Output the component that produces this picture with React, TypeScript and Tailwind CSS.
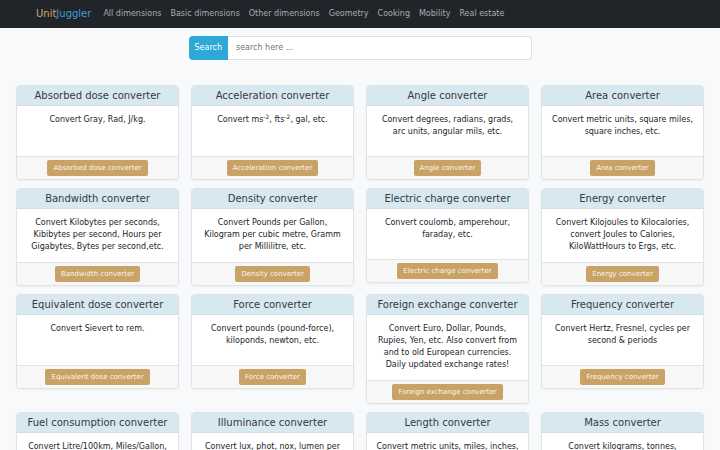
import { ReactNode } from "react";

type Converter = {
  title: string;
  desc: ReactNode;
};

const converters: Converter[] = [
  { title: "Absorbed dose converter", desc: "Convert Gray, Rad, J/kg." },
  {
    title: "Acceleration converter",
    desc: (
      <>
        Convert ms<sup className="text-[6px]">-2</sup>, fts<sup className="text-[6px]">-2</sup>, gal, etc.
      </>
    ),
  },
  { title: "Angle converter", desc: "Convert degrees, radians, grads, arc units, angular mils, etc." },
  { title: "Area converter", desc: "Convert metric units, square miles, square inches, etc." },
  {
    title: "Bandwidth converter",
    desc: "Convert Kilobytes per seconds, Kibibytes per second, Hours per Gigabytes, Bytes per second,etc.",
  },
  { title: "Density converter", desc: "Convert Pounds per Gallon, Kilogram per cubic metre, Gramm per Millilitre, etc." },
  { title: "Electric charge converter", desc: "Convert coulomb, amperehour, faraday, etc." },
  {
    title: "Energy converter",
    desc: "Convert Kilojoules to Kilocalories, convert Joules to Calories, KiloWattHours to Ergs, etc.",
  },
  { title: "Equivalent dose converter", desc: "Convert Sievert to rem." },
  { title: "Force converter", desc: "Convert pounds (pound-force), kiloponds, newton, etc." },
  {
    title: "Foreign exchange converter",
    desc: "Convert Euro, Dollar, Pounds, Rupies, Yen, etc. Also convert from and to old European currencies. Daily updated exchange rates!",
  },
  { title: "Frequency converter", desc: "Convert Hertz, Fresnel, cycles per second & periods" },
  { title: "Fuel consumption converter", desc: "Convert Litre/100km, Miles/Gallon, Kilometre/Litre, etc." },
  { title: "Illuminance converter", desc: "Convert lux, phot, nox, lumen per square metre, etc." },
  { title: "Length converter", desc: "Convert metric units, miles, inches, feet, yards, etc." },
  { title: "Mass converter", desc: "Convert kilograms, tonnes, milligrams, pounds, etc." },
];

const navLinks = [
  "All dimensions",
  "Basic dimensions",
  "Other dimensions",
  "Geometry",
  "Cooking",
  "Mobility",
  "Real estate",
];

function ConverterCard({ title, desc }: Converter) {
  return (
    <div className="flex flex-col rounded-[4px] border border-[#dfe3e6] bg-white shadow-[0_1px_2px_rgba(0,0,0,0.05)] overflow-hidden">
      <div className="bg-[#d8e8f0] border-b border-[#d3dde2] py-[2px] text-center text-[10px] leading-[15px] text-[#343a40]">
        {title}
      </div>
      <div className="min-h-[50px] px-2 pt-[8px] pb-[9px] text-center text-[8px] leading-[12px] text-[#212529]">{desc}</div>
      <div className="flex justify-center border-t border-[#e2e4e6] bg-[#f7f7f7] py-[3px]">
        <button className="rounded-[2px] bg-[#c9a266] px-[6px] py-[3px] text-[7px] leading-[10px] text-[#fbf5ea]">
          {title}
        </button>
      </div>
    </div>
  );
}

export default function App() {
  return (
    <div className="min-h-[450px] bg-[#f8f9fa] font-['DejaVu_Sans',sans-serif]">
      {/* Navbar */}
      <nav className="flex h-[28px] items-center bg-[#212529] pl-[36px]">
        <a className="mr-[12px] text-[10px] leading-none">
          <span className="text-[#d4a866]">Unit</span>
          <span className="text-[#3b9fd6]">Juggler</span>
        </a>
        <div className="flex gap-[9px]">
          {navLinks.map((l) => (
            <a key={l} className="text-[8px] leading-none text-[#a9acaf]">
              {l}
            </a>
          ))}
        </div>
      </nav>

      {/* Search */}
      <div className="mt-[8px] flex justify-center">
        <div className="flex h-[24px] w-[343px]">
          <button className="rounded-l-[4px] bg-[#2ea8d6] px-[6px] text-[8px] text-white">Search</button>
          <input
            className="flex-1 rounded-r-[4px] border border-l-0 border-[#dee2e6] bg-white px-[8px] text-[8px] text-[#495057] outline-none placeholder:text-[#6c757d]"
            placeholder="search here ..."
          />
        </div>
      </div>

      {/* Cards */}
      <div className="mt-[25px] grid grid-cols-4 items-start gap-x-[12px] gap-y-[8px] px-[16px] pb-6">
        {converters.map((c) => (
          <ConverterCard key={c.title} {...c} />
        ))}
      </div>
    </div>
  );
}
